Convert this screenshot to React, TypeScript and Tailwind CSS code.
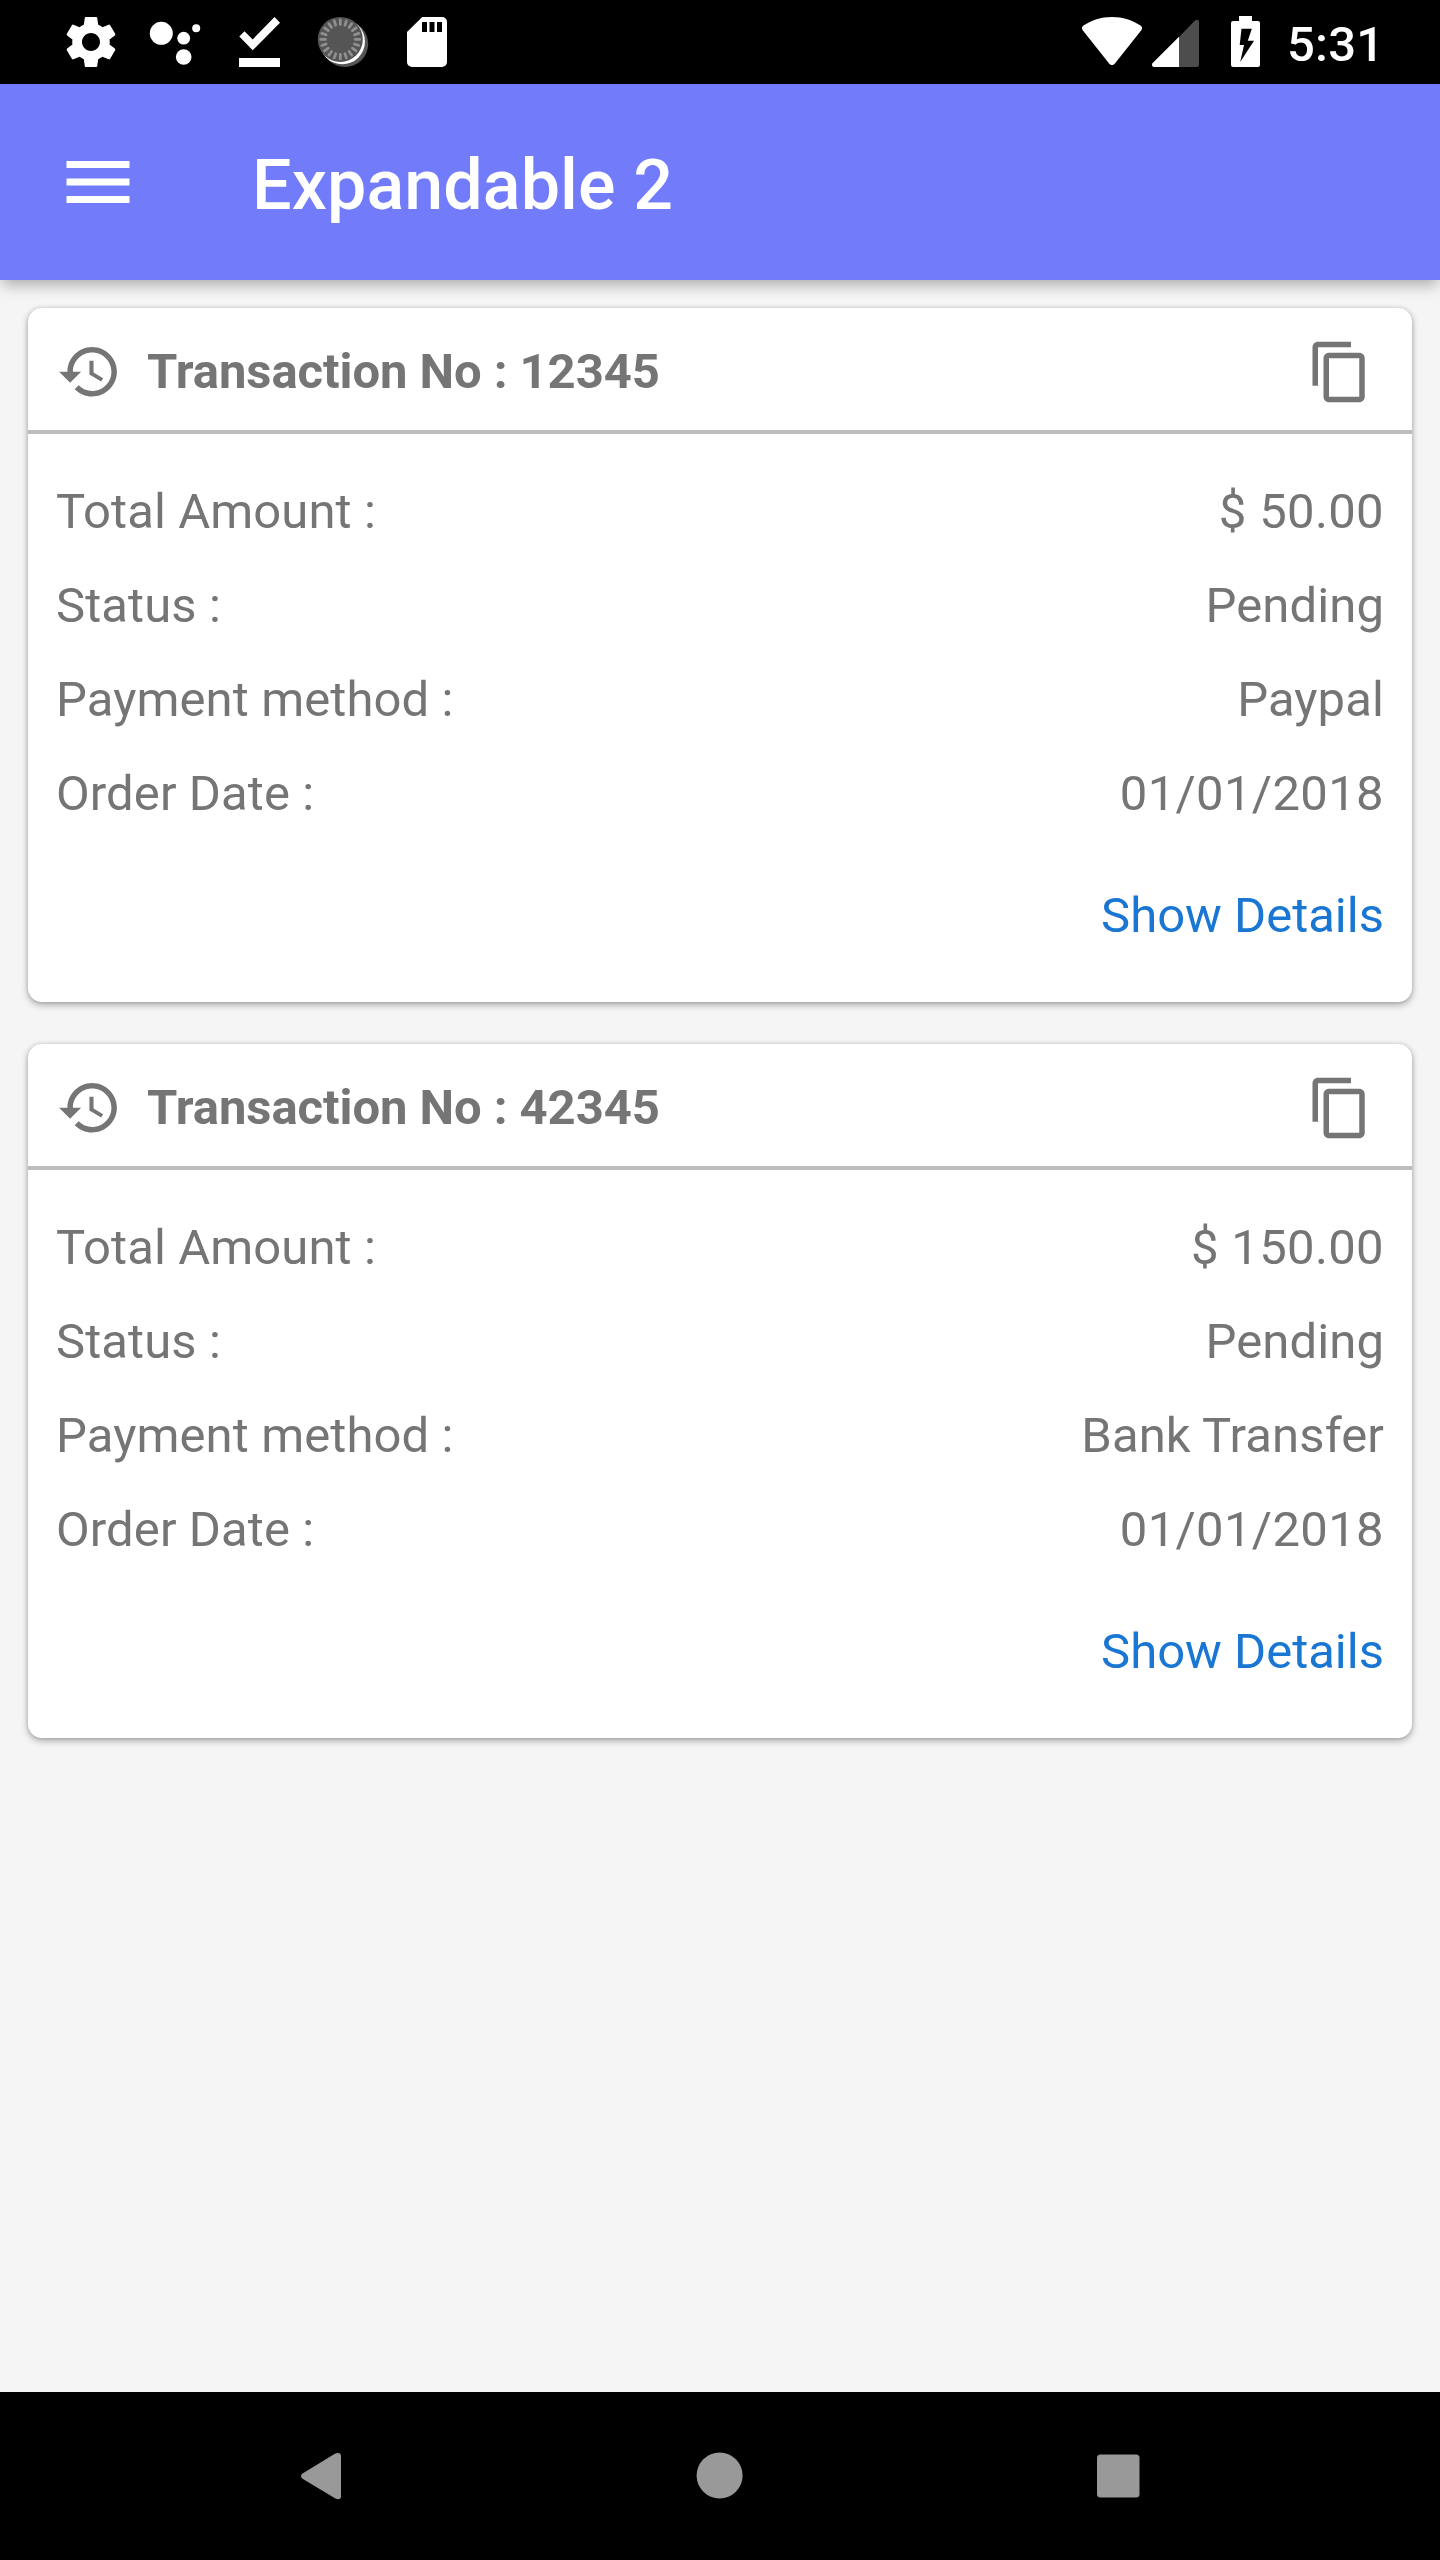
import React from "react";

type Transaction = {
  number: string;
  rows: { label: string; value: string; numeric?: boolean }[];
};

const transactions: Transaction[] = [
  {
    number: "12345",
    rows: [
      { label: "Total Amount :", value: "$ 50.00", numeric: true },
      { label: "Status :", value: "Pending" },
      { label: "Payment method :", value: "Paypal" },
      { label: "Order Date :", value: "01/01/2018", numeric: true },
    ],
  },
  {
    number: "42345",
    rows: [
      { label: "Total Amount :", value: "$ 150.00", numeric: true },
      { label: "Status :", value: "Pending" },
      { label: "Payment method :", value: "Bank Transfer" },
      { label: "Order Date :", value: "01/01/2018", numeric: true },
    ],
  },
];

const spinnerTicks = Array.from({ length: 20 }, (_, i) => i * 18);

function SettingsIcon() {
  return (
    <svg className="h-[60px] w-[60px]" viewBox="0 0 24 24" fill="#fff">
      <path d="M19.43 12.98c.04-.32.07-.64.07-.98s-.03-.66-.07-.98l2.11-1.65c.19-.15.24-.42.12-.64l-2-3.46c-.12-.22-.39-.3-.61-.22l-2.49 1c-.52-.4-1.08-.73-1.69-.98l-.38-2.65C14.46 2.18 14.25 2 14 2h-4c-.25 0-.46.18-.49.42l-.38 2.65c-.61.25-1.17.59-1.69.98l-2.49-1c-.23-.09-.49 0-.61.22l-2 3.46c-.13.22-.07.49.12.64l2.11 1.65c-.04.32-.07.65-.07.98s.03.66.07.98l-2.11 1.65c-.19.15-.24.42-.12.64l2 3.46c.12.22.39.3.61.22l2.49-1c.52.4 1.08.73 1.69.98l.38 2.65c.03.24.24.42.49.42h4c.25 0 .46-.18.49-.42l.38-2.65c.61-.25 1.17-.59 1.69-.98l2.49 1c.23.09.49 0 .61-.22l2-3.46c.12-.22.07-.49-.12-.64l-2.11-1.65zM12 15.6c-1.99 0-3.6-1.61-3.6-3.6s1.61-3.6 3.6-3.6 3.6 1.61 3.6 3.6-1.61 3.6-3.6 3.6z" />
    </svg>
  );
}

function AssistantIcon() {
  return (
    <svg className="h-[60px] w-[60px]" viewBox="145 12 60 60" fill="#fff">
      <circle cx="161.3" cy="33.3" r="11.5" />
      <circle cx="183.7" cy="38.2" r="6.4" />
      <circle cx="196.2" cy="28.2" r="4" />
      <circle cx="183.7" cy="57" r="7.8" />
    </svg>
  );
}

function DownloadDoneIcon() {
  return (
    <svg className="h-[60px] w-[60px]" viewBox="229 12 60 60" fill="#fff">
      <path d="M239.3 36.5l5.2-5.2 8.2 8.1L274.5 17l5.5 5.7-27.3 27.6zM239 58h41v9h-41z" />
    </svg>
  );
}

function SpinnerIcon() {
  return (
    <svg className="h-[60px] w-[60px]" viewBox="313 12 60 60">
      <circle cx="345" cy="43.8" r="23.2" fill="#555" />
      <circle cx="342.3" cy="41.6" r="22.7" fill="#fff" />
      <circle cx="340.3" cy="39.4" r="22.5" fill="#555" />
      <g stroke="#909090" strokeWidth="2.7" strokeLinecap="round">
        {spinnerTicks.map((a) => (
          <path key={a} d="M340.3 19.9v4.6" transform={`rotate(${a} 340.3 39.4)`} />
        ))}
      </g>
    </svg>
  );
}

function SdCardIcon() {
  return (
    <svg className="h-[60px] w-[60px]" viewBox="397 12 60 60" fill="#fff">
      <path
        fillRule="evenodd"
        d="M422.2 17H442a5 5 0 0 1 5 5v40a5 5 0 0 1-5 5h-30a5 5 0 0 1-5-5V32zM422 22v10h5V22zm7.5 0v10h5V22zm7.5 0v10h5V22z"
      />
    </svg>
  );
}

function WifiIcon() {
  return (
    <svg className="h-[60px] w-[60px]" viewBox="1082 12 60 60" fill="#fff">
      <path d="M1112 17c-11 0-20.500 3.200-28.500 8.600-1.700 1.200-2 3-.8 4.700l26.600 33.400c1.500 1.900 3.900 1.900 5.400 0l26.600-33.400c1.200-1.700.9-3.500-.8-4.700C1132.500 20.200 1123 17 1112 17z" />
    </svg>
  );
}

function SignalIcon() {
  return (
    <svg className="h-[60px] w-[60px]" viewBox="1145 12 60 60">
      <path d="M1179 37v30h17.500a2.500 2.500 0 0 0 2.500-2.500V22c0-2.200-2.500-3-4-1.500z" fill="#4d4d4d" />
      <path d="M1179 36.800v30.200h-24.500c-2.400 0-3.300-2.600-1.800-4.100z" fill="#fff" />
    </svg>
  );
}

function BatteryIcon() {
  return (
    <svg className="h-[60px] w-[60px]" viewBox="1215 12 60 60" fill="#fff">
      <path
        fillRule="evenodd"
        d="M1239 16h13v5h6a2 2 0 0 1 2 2v42a2 2 0 0 1-2 2h-25a2 2 0 0 1-2-2V23a2 2 0 0 1 2-2h6zM1241.500 28.700l-1.800 16.300h4.300l-3.800 17 13.800-21.200h-6.200l4-12.100z"
      />
    </svg>
  );
}

function HistoryIcon() {
  return (
    <svg className="h-[66px] w-[66px]" viewBox="-.15 .1 24 24" fill="#757575">
      <path d="M13 3c-4.970 0-9 4.030-9 9H1l3.890 3.890.07.14L9 12H6c0-3.870 3.130-7 7-7s7 3.130 7 7-3.130 7-7 7c-1.930 0-3.680-.79-4.940-2.060l-1.420 1.420C8.270 19.990 10.510 21 13 21c4.970 0 9-4.030 9-9s-4.030-9-9-9zm-1 5v5l4.280 2.540.72-1.210-3.500-2.080V8H12z" />
    </svg>
  );
}

function CopyIcon() {
  return (
    <svg className="h-[66px] w-[66px]" viewBox="0 0 24 24" fill="#757575">
      <path d="M16 1H4c-1.100 0-2 .9-2 2v14h2V3h12V1zm3 4H8c-1.100 0-2 .9-2 2v14c0 1.100.9 2 2 2h11c1.100 0 2-.9 2-2V7c0-1.100-.9-2-2-2zm0 16H8V7h11v14z" />
    </svg>
  );
}

function StatusBar() {
  return (
    <header className="flex h-[84px] items-center justify-between bg-black pl-[61px] pr-[61px]">
      <div className="flex items-center gap-6">
        <SettingsIcon />
        <AssistantIcon />
        <DownloadDoneIcon />
        <SpinnerIcon />
        <SdCardIcon />
      </div>
      <div className="flex items-center">
        <WifiIcon />
        <span className="ml-[3px]">
          <SignalIcon />
        </span>
        <span className="ml-[10px]">
          <BatteryIcon />
        </span>
        <span className="ml-[12px] w-[92px] whitespace-nowrap pt-[5px] text-[49px] font-medium leading-[60px] tracking-[0.2px] text-white">5:31</span>
      </div>
    </header>
  );
}

function AppBar() {
  return (
    <div className="relative flex h-[196px] items-center bg-[#727cfb] pl-[66px] shadow-[0_7px_14px_-2px_rgba(0,0,0,0.3)]">
      <svg className="h-[42px] w-[64px]" viewBox="0 0 64 42" fill="#fff">
        <path d="M.5 0h63v7H.5zM.5 17.500h63v7H.5zM.5 35h63v7H.5z" />
      </svg>
      <h1 className="ml-[122px] pt-[6px] text-[70px] font-medium leading-[84px] tracking-[0.1px] text-white">Expandable 2</h1>
    </div>
  );
}

function TransactionCard({ number, rows }: Transaction) {
  return (
    <article className="h-[694px] rounded-[14px] bg-white text-[49px] text-[#757575] shadow-[0_3px_7px_rgba(0,0,0,0.3),0_0_4px_rgba(0,0,0,0.14)]">
      <div className="flex h-[126px] items-center border-b-4 border-[#bdbdbd] pl-[28px] pr-[39px] pt-[5px]">
        <HistoryIcon />
        <h2 className="ml-[25px] flex-1 font-bold tracking-[-0.07px]">Transaction No : {number}</h2>
        <CopyIcon />
      </div>
      <div className="px-7 pt-[31px] leading-[94px]">
        {rows.map((row) => (
          <div key={row.label} className="flex justify-between">
            <span className="tracking-[0.1px]">{row.label}</span>
            <span className={row.numeric ? "tracking-[0.35px]" : "tracking-[0.1px]"}>{row.value}</span>
          </div>
        ))}
        <div className="mt-7 text-right text-[#1976d2]">Show Details</div>
      </div>
    </article>
  );
}

function NavigationBar() {
  return (
    <nav className="flex h-[168px] items-center justify-center gap-[350px] bg-black">
      <svg className="h-12 w-12" viewBox="298 2452 48 48" fill="#999">
        <path d="M302.500 2473.500l32-19.400c3.500-2 6.500-1 6.500 2v40.400c0 3-3 3.500-6 1.700l-32.500-19.400c-2-1.400-2-3.900 0-5.300z" />
      </svg>
      <svg className="h-12 w-12" viewBox="696 2452 48 48" fill="#999">
        <circle cx="719.600" cy="2475.500" r="23" />
      </svg>
      <svg className="h-12 w-12" viewBox="1094 2452 48 48" fill="#999">
        <rect x="1097" y="2454.500" width="42.500" height="43" rx="3.500" />
      </svg>
    </nav>
  );
}

export default function App() {
  return (
    <div className="flex h-[2560px] w-[1440px] flex-col overflow-hidden bg-[#f5f5f5] font-[Roboto,sans-serif]">
      <StatusBar />
      <AppBar />
      <main className="flex flex-1 flex-col gap-[42px] px-7 pt-7">
        {transactions.map((t) => (
          <TransactionCard key={t.number} {...t} />
        ))}
      </main>
      <NavigationBar />
    </div>
  );
}
